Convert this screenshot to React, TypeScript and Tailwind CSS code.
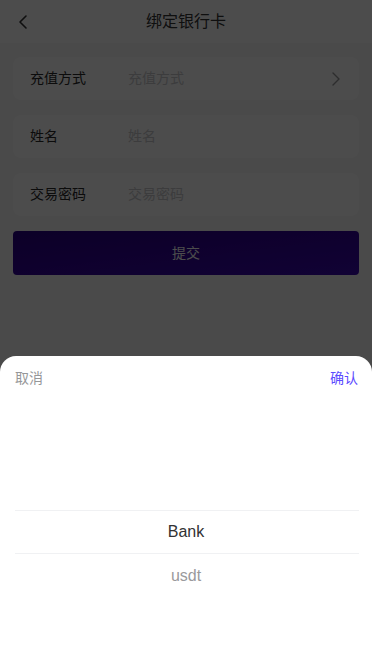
import React from "react";

const font = { fontFamily: '"Liberation Sans", "Noto Sans CJK SC", sans-serif' };

function Row({ label, placeholder, arrow }: { label: string; placeholder: string; arrow?: boolean }) {
  return (
    <div className="flex h-[43px] items-center rounded-[8px] bg-white pl-[17px] pr-[18px]">
      <div className="w-[98px] text-[14px] text-[#2a2a2a]">{label}</div>
      <div className="flex-1 text-[14px] text-[#c8c9cc]">{placeholder}</div>
      {arrow && (
        <svg width="10" height="16" viewBox="0 0 10 16" fill="none">
          <path d="M2 2l6 6-6 6" stroke="#969799" strokeWidth="1.4" strokeLinecap="round" strokeLinejoin="round" />
        </svg>
      )}
    </div>
  );
}

export default function App() {
  return (
    <div className="relative h-[661px] w-full overflow-hidden bg-[#f7f7f7]" style={font}>
      <div className="grid h-[43px] grid-cols-[48px_1fr_48px] items-center bg-white">
        <div className="flex items-center pl-[18px]">
          <svg width="10" height="16" viewBox="0 0 10 16" fill="none">
            <path d="M8 2L2 8l6 6" stroke="#323233" strokeWidth="1.6" strokeLinecap="round" strokeLinejoin="round" />
          </svg>
        </div>
        <div className="text-center text-[16px] text-[#323233]">绑定银行卡</div>
        <div />
      </div>
      <div className="flex flex-col gap-[15px] px-[13px] pt-[14px]">
        <Row label="充值方式" placeholder="充值方式" arrow />
        <Row label="姓名" placeholder="姓名" />
        <Row label="交易密码" placeholder="交易密码" />
        <div className="flex h-[44px] items-center justify-center rounded-[4px] bg-gradient-to-br from-[#2a0084] to-[#3a08b0] text-[14px] text-white">
          提交
        </div>
      </div>

      <div className="absolute inset-0 bg-black/70" />

      <div className="absolute bottom-0 left-0 right-0 top-[356px] rounded-t-[16px] bg-white">
        <div className="flex h-[44px] items-center justify-between pl-[15px] pr-[14px] text-[14px]">
          <span className="text-[#969799]">取消</span>
          <span className="text-[#5b4bff]">确认</span>
        </div>
        <div className="relative h-[264px] overflow-hidden">
          <div className="flex flex-col pt-[110px]">
            <div className="flex h-[44px] items-center justify-center text-[16px] text-[#323233]">Bank</div>
            <div className="flex h-[44px] items-center justify-center text-[16px] text-[#9a9a9c]">usdt</div>
          </div>
          <div className="pointer-events-none absolute left-[15px] right-[13px] top-[110px] h-[44px] border-y border-[#f0f1f3]" />
        </div>
      </div>
    </div>
  );
}
